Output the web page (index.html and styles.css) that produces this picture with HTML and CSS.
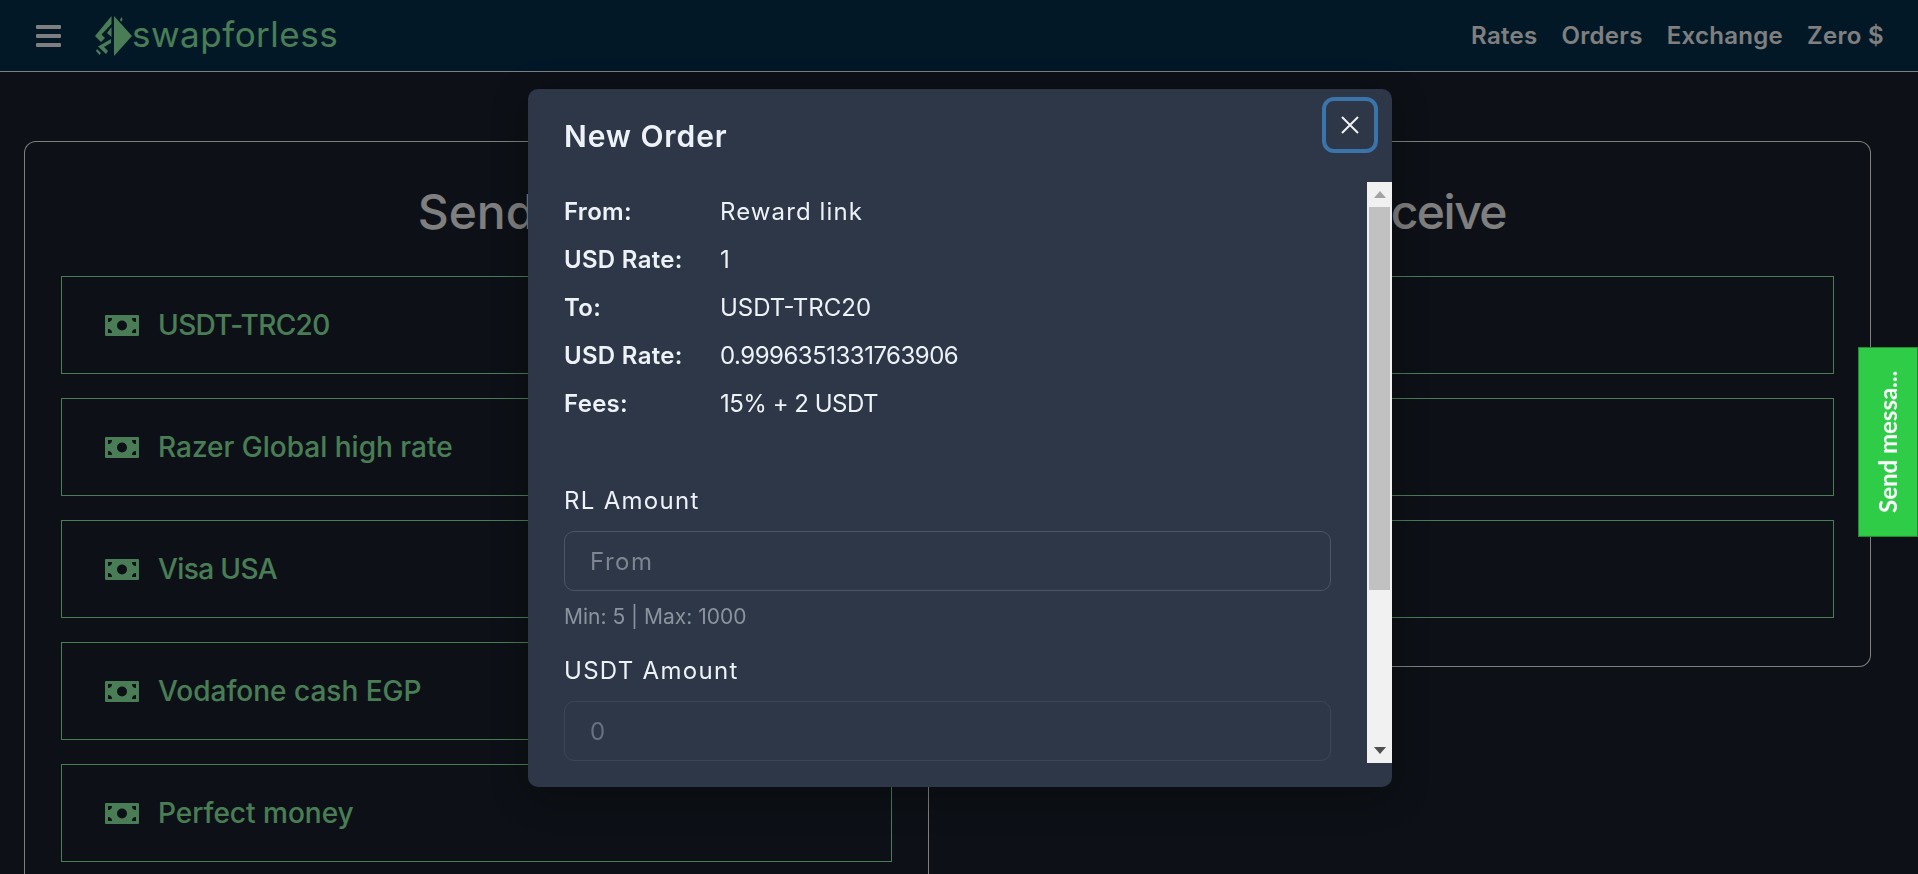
FILE: index.html
```html
<!DOCTYPE html>
<html lang="en">
<head>
  <meta charset="UTF-8" />
  <meta name="viewport" content="width=device-width, initial-scale=1.0" />
  <title>swapforless</title>
  <link rel="stylesheet" href="styles.css">
</head>
<body>
  <header class="navbar">
    <div class="brand">
      <button class="menu-btn" type="button" aria-label="Menu"><span></span><span></span><span></span></button>
      <a class="logo" href="#">
        <svg class="logo-mark" viewBox="0 0 38 40" width="38" height="40">
          <path d="M19 0 L37 20 L19 40 Z" />
          <path d="M25 3.500 L27 1 L27.500 4 L26 6 Z" />
          <path d="M16.500 0 L0 20 L6 26 L10 22 L6.500 18.500 L16.500 8 Z" />
          <path d="M16.500 11 L12 17 L16.500 21 Z" />
          <path d="M16 23 V27 L9 31 L13 35 L11 38 L3 30.500 Z" />
          <path d="M2 33 L6 37 L4.500 39 L1 35 Z" />
        </svg>
        <span class="logo-text">swapforless</span>
      </a>
    </div>
    <nav class="nav-links">
      <a href="#">Rates</a>
      <a href="#">Orders</a>
      <a href="#">Exchange</a>
      <a href="#">Zero $</a>
    </nav>
  </header>

  <main class="exchange">
    <!-- Send column -->
    <section class="column column-send">
      <h2>Send</h2>
      <div class="item">
        <svg class="bill" viewBox="0 0 34 21"><use href="#bill" /></svg>
        <span class="caps">USDT-TRC20</span>
      </div>
      <div class="item">
        <svg class="bill" viewBox="0 0 34 21"><use href="#bill" /></svg>
        <span>Razer Global high rate</span>
      </div>
      <div class="item">
        <svg class="bill" viewBox="0 0 34 21"><use href="#bill" /></svg>
        <span class="caps">Visa USA</span>
      </div>
      <div class="item">
        <svg class="bill" viewBox="0 0 34 21"><use href="#bill" /></svg>
        <span>Vodafone cash EGP</span>
      </div>
      <div class="item">
        <svg class="bill" viewBox="0 0 34 21"><use href="#bill" /></svg>
        <span>Perfect money</span>
      </div>
    </section>

    <!-- Receive column -->
    <section class="column column-receive">
      <h2>Receive</h2>
      <div class="item">
        <svg class="bill" viewBox="0 0 34 21"><use href="#bill" /></svg>
        <span class="caps">USDT-TRC20</span>
      </div>
      <div class="item">
        <svg class="bill" viewBox="0 0 34 21"><use href="#bill" /></svg>
        <span>Razer Global</span>
      </div>
      <div class="item">
        <svg class="bill" viewBox="0 0 34 21"><use href="#bill" /></svg>
        <span class="caps">Visa USA</span>
      </div>
    </section>
  </main>

  <div class="backdrop"></div>

  <div class="modal-wrap">
    <div class="modal">
      <div class="modal-head">
        <h3>New Order</h3>
        <button class="close-btn" type="button" aria-label="Close">
          <svg viewBox="0 0 18 18" width="18" height="18"><path d="M1 1 L17 17 M17 1 L1 17" /></svg>
        </button>
      </div>
      <div class="modal-main">
        <div class="modal-body">
          <dl class="summary">
            <dt>From:</dt><dd class="wide">Reward link</dd>
            <dt>USD Rate:</dt><dd>1</dd>
            <dt>To:</dt><dd>USDT-TRC20</dd>
            <dt>USD Rate:</dt><dd class="digits">0.9996351331763906</dd>
            <dt>Fees:</dt><dd class="digits">15% + 2 USDT</dd>
          </dl>
          <form class="order-form">
            <label for="rl-amount">RL Amount</label>
            <input id="rl-amount" type="text" placeholder="From">
            <p class="hint">Min: 5 | Max: 1000</p>
            <label for="usdt-amount">USDT Amount</label>
            <input id="usdt-amount" type="text" placeholder="0" disabled>
          </form>
        </div>
        <div class="scrollbar">
          <div class="arrow"><span class="arrow-up"></span></div>
          <div class="thumb"></div>
          <div class="track"></div>
          <div class="arrow"><span class="arrow-down"></span></div>
        </div>
      </div>
    </div>
  </div>

  <button class="send-tab" type="button">Send messa...</button>

  <svg class="sprite" width="0" height="0">
    <symbol id="bill" viewBox="0 0 34 21">
      <path fill-rule="evenodd" d="M1 0 H33 A1 1 0 0 1 34 1 V20 A1 1 0 0 1 33 21 H1 A1 1 0 0 1 0 20 V1 A1 1 0 0 1 1 0 Z M17 5.500 A5 5 0 1 0 17 15.500 A5 5 0 1 0 17 5.500 Z M3 3 V7 A4 4 0 0 0 7 3 Z M27 3 A4 4 0 0 0 31 7 V3 Z M3 14 V18 H7 A4 4 0 0 0 3 14 Z M31 14 A4 4 0 0 0 27 18 H31 Z" />
    </symbol>
  </svg>
</body>
</html>
```

FILE: styles.css
```css
* {
  margin: 0;
  padding: 0;
  box-sizing: border-box;
  font-family: 'Inter', 'Liberation Sans', sans-serif;
}
html,
body {
  height: 100%;
  overflow: hidden;
}
body {
  background-color: #1a222e;
  color: #fff;
}
a {
  color: inherit;
  text-decoration: none;
}
.sprite {
  position: absolute;
}

/* navbar */
.navbar {
  height: 72px;
  display: flex;
  align-items: center;
  justify-content: space-between;
  padding: 0 34px 0 36px;
  background: #04304f;
  border-bottom: 1px solid #fff;
}
.brand {
  display: flex;
  align-items: center;
  gap: 34px;
}
.menu-btn {
  width: 25px;
  display: flex;
  flex-direction: column;
  gap: 5px;
  background: none;
  border: none;
}
.menu-btn span {
  display: block;
  height: 4px;
  border-radius: 1px;
  background: #fff;
}
.logo {
  display: flex;
  align-items: center;
  color: #94fbaa;
}
.logo-mark {
  fill: #94fbaa;
}
.logo-text {
  font-size: 35px;
  line-height: 40px;
  letter-spacing: 0.5px;
  margin: -3px 0 0 -1px;
}
.nav-links {
  display: flex;
  gap: 24px;
  font-size: 24px;
  font-weight: 600;
  letter-spacing: 0.3px;
}

/* columns */
.exchange {
  display: grid;
  grid-template-columns: 905px 942px;
  align-items: start;
  padding: 69px 0 0 24px;
}
.column {
  padding: 0 36px 48px;
  border-top: 1px solid #fff;
}
.column h2 {
  font-size: 48px;
  font-weight: 500;
  line-height: 58px;
  text-align: center;
  padding-top: 41px;
  margin-bottom: 35px;
}
.column-send {
  border-left: 1px solid #fff;
  border-right: 1px solid #fff;
  border-top-left-radius: 12px;
  min-height: 900px;
}
.column-receive {
  border-right: 1px solid #fff;
  border-bottom: 1px solid #fff;
  border-top-right-radius: 12px;
  border-bottom-right-radius: 12px;
}
.column-receive h2 {
  padding-left: 42px;
  letter-spacing: -1.5px;
}
.item {
  height: 98px;
  display: flex;
  align-items: center;
  gap: 19px;
  padding-left: 43px;
  margin-bottom: 24px;
  border: 1px solid #94fbaa;
  color: #94fbaa;
  font-size: 28px;
  font-weight: 500;
}
.item:last-child {
  margin-bottom: 0;
}
.item .caps {
  letter-spacing: -0.6px;
}
.bill {
  width: 34px;
  height: 21px;
  fill: #94fbaa;
}

/* modal */
.backdrop {
  position: fixed;
  inset: 0;
  background: rgba(0, 0, 0, 0.5);
}
.modal-wrap {
  position: fixed;
  inset: 0;
  display: flex;
  justify-content: center;
  padding: 89px 0 0 2px;
}
.modal {
  width: 864px;
  height: 698px;
  display: flex;
  flex-direction: column;
  color: #edf2f7;
  background: #2d3748;
  border-radius: 10px;
  box-shadow: 0 8px 40px rgba(0, 0, 0, 0.35);
}
.modal-head {
  height: 93px;
  flex-shrink: 0;
  display: flex;
  justify-content: space-between;
  padding: 8px 14px 0 36px;
}
.modal-head h3 {
  font-size: 30px;
  font-weight: 600;
  line-height: 78px;
  letter-spacing: 0.9px;
}
.close-btn {
  width: 56px;
  height: 56px;
  display: flex;
  align-items: center;
  justify-content: center;
  background: none;
  border: 4px solid #3b74a9;
  border-radius: 12px;
}
.close-btn path {
  fill: none;
  stroke: #f2f2f2;
  stroke-width: 2;
}
.modal-main {
  height: 581px;
  display: flex;
}
.modal-body {
  flex: 1;
  overflow: hidden;
  padding: 6px 36px 0;
}
.scrollbar {
  width: 25px;
  display: flex;
  flex-direction: column;
  background: #f1f1f1;
}
.arrow {
  height: 25px;
  display: flex;
  align-items: center;
  justify-content: center;
}
.arrow-up {
  border: 6px solid transparent;
  border-top: none;
  border-bottom: 7px solid #a3a3a3;
}
.arrow-down {
  border: 6px solid transparent;
  border-bottom: none;
  border-top: 7px solid #505050;
}
.thumb {
  height: 383px;
  margin: 0 2px;
  background: #c1c1c1;
}
.track {
  flex: 1;
}
.summary {
  display: grid;
  grid-template-columns: 156px 1fr;
  font-size: 24px;
  line-height: 48px;
  margin-bottom: 55px;
}
.summary dt {
  font-weight: 600;
  letter-spacing: 0.3px;
}
.summary .wide {
  letter-spacing: 1.1px;
}
.summary .digits {
  letter-spacing: -0.5px;
}
.order-form {
  display: flex;
  flex-direction: column;
}
.order-form label {
  font-size: 24px;
  line-height: 36px;
  letter-spacing: 1.3px;
  margin-bottom: 12px;
}
.order-form input {
  height: 60px;
  padding: 0 25px;
  font-size: 24px;
  letter-spacing: 1.5px;
  color: #fff;
  background: #2d3748;
  border: 1px solid #4a5568;
  border-radius: 10px;
}
.order-form input::placeholder {
  color: #7d8591;
}
.order-form input:disabled {
  border-color: #3b4657;
}
.order-form input:disabled::placeholder {
  color: #687180;
}
.hint {
  font-size: 21px;
  line-height: 30px;
  color: #8b939e;
  margin: 11px 0 21px;
}

/* chat tab */
.send-tab {
  position: fixed;
  top: 347px;
  right: 0;
  width: 60px;
  height: 190px;
  writing-mode: vertical-rl;
  transform: rotate(180deg);
  display: flex;
  align-items: center;
  justify-content: center;
  font-family: 'Lato', sans-serif;
  font-size: 24px;
  font-weight: 700;
  color: #fff;
  background: #2ecc47;
  border: 1px solid #1f8a33;
}
```
